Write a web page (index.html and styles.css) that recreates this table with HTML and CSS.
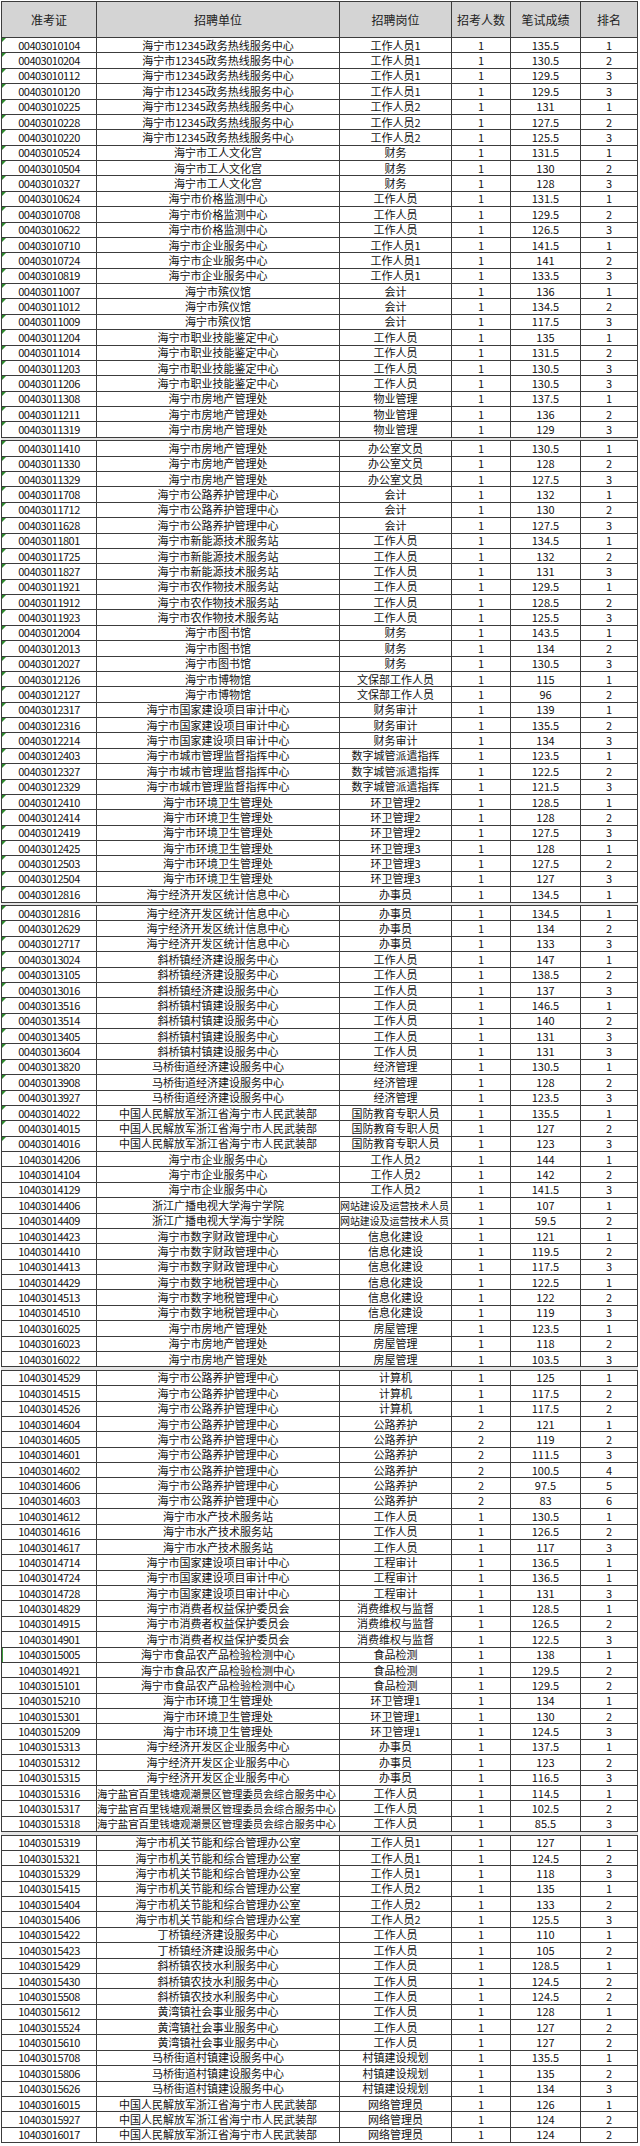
FILE: index.html
```html
<!DOCTYPE html>
<html lang="zh-CN">
<head>
<meta charset="utf-8">
<title>笔试成绩</title>
<link rel="stylesheet" href="styles.css">
</head>
<body>
<table class="sheet">
<colgroup>
<col class="c-id"><col class="c-unit"><col class="c-post"><col class="c-num"><col class="c-score"><col class="c-rank">
</colgroup>
<thead>
<tr class="head"><th>准考证</th><th>招聘单位</th><th>招聘岗位</th><th>招考人数</th><th>笔试成绩</th><th>排名</th></tr>
</thead>
<tbody>
<tr><td class="nt">00403010104</td><td>海宁市12345政务热线服务中心</td><td>工作人员1</td><td>1</td><td>135.5</td><td>1</td></tr>
<tr><td class="nt">00403010204</td><td>海宁市12345政务热线服务中心</td><td>工作人员1</td><td>1</td><td>130.5</td><td>2</td></tr>
<tr><td class="nt">00403010112</td><td>海宁市12345政务热线服务中心</td><td>工作人员1</td><td>1</td><td>129.5</td><td>3</td></tr>
<tr><td class="nt">00403010120</td><td>海宁市12345政务热线服务中心</td><td>工作人员1</td><td>1</td><td>129.5</td><td>3</td></tr>
<tr><td class="nt">00403010225</td><td>海宁市12345政务热线服务中心</td><td>工作人员2</td><td>1</td><td>131</td><td>1</td></tr>
<tr><td class="nt">00403010228</td><td>海宁市12345政务热线服务中心</td><td>工作人员2</td><td>1</td><td>127.5</td><td>2</td></tr>
<tr><td class="nt">00403010220</td><td>海宁市12345政务热线服务中心</td><td>工作人员2</td><td>1</td><td>125.5</td><td>3</td></tr>
<tr><td class="nt">00403010524</td><td>海宁市工人文化宫</td><td>财务</td><td>1</td><td>131.5</td><td>1</td></tr>
<tr><td class="nt">00403010504</td><td>海宁市工人文化宫</td><td>财务</td><td>1</td><td>130</td><td>2</td></tr>
<tr><td class="nt">00403010327</td><td>海宁市工人文化宫</td><td>财务</td><td>1</td><td>128</td><td>3</td></tr>
<tr><td class="nt">00403010624</td><td>海宁市价格监测中心</td><td>工作人员</td><td>1</td><td>131.5</td><td>1</td></tr>
<tr><td class="nt">00403010708</td><td>海宁市价格监测中心</td><td>工作人员</td><td>1</td><td>129.5</td><td>2</td></tr>
<tr><td class="nt">00403010622</td><td>海宁市价格监测中心</td><td>工作人员</td><td>1</td><td>126.5</td><td>3</td></tr>
<tr><td class="nt">00403010710</td><td>海宁市企业服务中心</td><td>工作人员1</td><td>1</td><td>141.5</td><td>1</td></tr>
<tr><td class="nt">00403010724</td><td>海宁市企业服务中心</td><td>工作人员1</td><td>1</td><td>141</td><td>2</td></tr>
<tr><td class="nt">00403010819</td><td>海宁市企业服务中心</td><td>工作人员1</td><td>1</td><td>133.5</td><td>3</td></tr>
<tr><td class="nt">00403011007</td><td>海宁市殡仪馆</td><td>会计</td><td>1</td><td>136</td><td>1</td></tr>
<tr><td class="nt">00403011012</td><td>海宁市殡仪馆</td><td>会计</td><td>1</td><td>134.5</td><td>2</td></tr>
<tr><td class="nt">00403011009</td><td>海宁市殡仪馆</td><td>会计</td><td>1</td><td>117.5</td><td>3</td></tr>
<tr><td class="nt">00403011204</td><td>海宁市职业技能鉴定中心</td><td>工作人员</td><td>1</td><td>135</td><td>1</td></tr>
<tr><td class="nt">00403011014</td><td>海宁市职业技能鉴定中心</td><td>工作人员</td><td>1</td><td>131.5</td><td>2</td></tr>
<tr><td class="nt">00403011203</td><td>海宁市职业技能鉴定中心</td><td>工作人员</td><td>1</td><td>130.5</td><td>3</td></tr>
<tr><td class="nt">00403011206</td><td>海宁市职业技能鉴定中心</td><td>工作人员</td><td>1</td><td>130.5</td><td>3</td></tr>
<tr><td class="nt">00403011308</td><td>海宁市房地产管理处</td><td>物业管理</td><td>1</td><td>137.5</td><td>1</td></tr>
<tr><td class="nt">00403011211</td><td>海宁市房地产管理处</td><td>物业管理</td><td>1</td><td>136</td><td>2</td></tr>
<tr><td class="nt">00403011319</td><td>海宁市房地产管理处</td><td>物业管理</td><td>1</td><td>129</td><td>3</td></tr>
<tr class="gap"><td colspan="6"></td></tr>
<tr><td class="nt">00403011410</td><td>海宁市房地产管理处</td><td>办公室文员</td><td>1</td><td>130.5</td><td>1</td></tr>
<tr><td class="nt">00403011330</td><td>海宁市房地产管理处</td><td>办公室文员</td><td>1</td><td>128</td><td>2</td></tr>
<tr><td class="nt">00403011329</td><td>海宁市房地产管理处</td><td>办公室文员</td><td>1</td><td>127.5</td><td>3</td></tr>
<tr><td class="nt">00403011708</td><td>海宁市公路养护管理中心</td><td>会计</td><td>1</td><td>132</td><td>1</td></tr>
<tr><td class="nt">00403011712</td><td>海宁市公路养护管理中心</td><td>会计</td><td>1</td><td>130</td><td>2</td></tr>
<tr><td class="nt">00403011628</td><td>海宁市公路养护管理中心</td><td>会计</td><td>1</td><td>127.5</td><td>3</td></tr>
<tr><td class="nt">00403011801</td><td>海宁市新能源技术服务站</td><td>工作人员</td><td>1</td><td>134.5</td><td>1</td></tr>
<tr><td class="nt">00403011725</td><td>海宁市新能源技术服务站</td><td>工作人员</td><td>1</td><td>132</td><td>2</td></tr>
<tr><td class="nt">00403011827</td><td>海宁市新能源技术服务站</td><td>工作人员</td><td>1</td><td>131</td><td>3</td></tr>
<tr><td class="nt">00403011921</td><td>海宁市农作物技术服务站</td><td>工作人员</td><td>1</td><td>129.5</td><td>1</td></tr>
<tr><td class="nt">00403011912</td><td>海宁市农作物技术服务站</td><td>工作人员</td><td>1</td><td>128.5</td><td>2</td></tr>
<tr><td class="nt">00403011923</td><td>海宁市农作物技术服务站</td><td>工作人员</td><td>1</td><td>125.5</td><td>3</td></tr>
<tr><td class="nt">00403012004</td><td>海宁市图书馆</td><td>财务</td><td>1</td><td>143.5</td><td>1</td></tr>
<tr><td class="nt">00403012013</td><td>海宁市图书馆</td><td>财务</td><td>1</td><td>134</td><td>2</td></tr>
<tr><td class="nt">00403012027</td><td>海宁市图书馆</td><td>财务</td><td>1</td><td>130.5</td><td>3</td></tr>
<tr><td class="nt">00403012126</td><td>海宁市博物馆</td><td>文保部工作人员</td><td>1</td><td>115</td><td>1</td></tr>
<tr><td class="nt">00403012127</td><td>海宁市博物馆</td><td>文保部工作人员</td><td>1</td><td>96</td><td>2</td></tr>
<tr><td class="nt">00403012317</td><td>海宁市国家建设项目审计中心</td><td>财务审计</td><td>1</td><td>139</td><td>1</td></tr>
<tr><td class="nt">00403012316</td><td>海宁市国家建设项目审计中心</td><td>财务审计</td><td>1</td><td>135.5</td><td>2</td></tr>
<tr><td class="nt">00403012214</td><td>海宁市国家建设项目审计中心</td><td>财务审计</td><td>1</td><td>134</td><td>3</td></tr>
<tr><td class="nt">00403012403</td><td>海宁市城市管理监督指挥中心</td><td>数字城管派遣指挥</td><td>1</td><td>123.5</td><td>1</td></tr>
<tr><td class="nt">00403012327</td><td>海宁市城市管理监督指挥中心</td><td>数字城管派遣指挥</td><td>1</td><td>122.5</td><td>2</td></tr>
<tr><td class="nt">00403012329</td><td>海宁市城市管理监督指挥中心</td><td>数字城管派遣指挥</td><td>1</td><td>121.5</td><td>3</td></tr>
<tr><td class="nt">00403012410</td><td>海宁市环境卫生管理处</td><td>环卫管理2</td><td>1</td><td>128.5</td><td>1</td></tr>
<tr><td class="nt">00403012414</td><td>海宁市环境卫生管理处</td><td>环卫管理2</td><td>1</td><td>128</td><td>2</td></tr>
<tr><td class="nt">00403012419</td><td>海宁市环境卫生管理处</td><td>环卫管理2</td><td>1</td><td>127.5</td><td>3</td></tr>
<tr><td class="nt">00403012425</td><td>海宁市环境卫生管理处</td><td>环卫管理3</td><td>1</td><td>128</td><td>1</td></tr>
<tr><td class="nt">00403012503</td><td>海宁市环境卫生管理处</td><td>环卫管理3</td><td>1</td><td>127.5</td><td>2</td></tr>
<tr><td class="nt">00403012504</td><td>海宁市环境卫生管理处</td><td>环卫管理3</td><td>1</td><td>127</td><td>3</td></tr>
<tr><td class="nt">00403012816</td><td>海宁经济开发区统计信息中心</td><td>办事员</td><td>1</td><td>134.5</td><td>1</td></tr>
<tr class="gap"><td colspan="6"></td></tr>
<tr><td class="nt">00403012816</td><td>海宁经济开发区统计信息中心</td><td>办事员</td><td>1</td><td>134.5</td><td>1</td></tr>
<tr><td class="nt">00403012629</td><td>海宁经济开发区统计信息中心</td><td>办事员</td><td>1</td><td>134</td><td>2</td></tr>
<tr><td class="nt">00403012717</td><td>海宁经济开发区统计信息中心</td><td>办事员</td><td>1</td><td>133</td><td>3</td></tr>
<tr><td class="nt">00403013024</td><td>斜桥镇经济建设服务中心</td><td>工作人员</td><td>1</td><td>147</td><td>1</td></tr>
<tr><td class="nt">00403013105</td><td>斜桥镇经济建设服务中心</td><td>工作人员</td><td>1</td><td>138.5</td><td>2</td></tr>
<tr><td class="nt">00403013016</td><td>斜桥镇经济建设服务中心</td><td>工作人员</td><td>1</td><td>137</td><td>3</td></tr>
<tr><td class="nt">00403013516</td><td>斜桥镇村镇建设服务中心</td><td>工作人员</td><td>1</td><td>146.5</td><td>1</td></tr>
<tr><td class="nt">00403013514</td><td>斜桥镇村镇建设服务中心</td><td>工作人员</td><td>1</td><td>140</td><td>2</td></tr>
<tr><td class="nt">00403013405</td><td>斜桥镇村镇建设服务中心</td><td>工作人员</td><td>1</td><td>131</td><td>3</td></tr>
<tr><td class="nt">00403013604</td><td>斜桥镇村镇建设服务中心</td><td>工作人员</td><td>1</td><td>131</td><td>3</td></tr>
<tr><td class="nt">00403013820</td><td>马桥街道经济建设服务中心</td><td>经济管理</td><td>1</td><td>130.5</td><td>1</td></tr>
<tr><td class="nt">00403013908</td><td>马桥街道经济建设服务中心</td><td>经济管理</td><td>1</td><td>128</td><td>2</td></tr>
<tr><td class="nt">00403013927</td><td>马桥街道经济建设服务中心</td><td>经济管理</td><td>1</td><td>123.5</td><td>3</td></tr>
<tr><td class="nt">00403014022</td><td>中国人民解放军浙江省海宁市人民武装部</td><td>国防教育专职人员</td><td>1</td><td>135.5</td><td>1</td></tr>
<tr><td class="nt">00403014015</td><td>中国人民解放军浙江省海宁市人民武装部</td><td>国防教育专职人员</td><td>1</td><td>127</td><td>2</td></tr>
<tr><td class="nt">00403014016</td><td>中国人民解放军浙江省海宁市人民武装部</td><td>国防教育专职人员</td><td>1</td><td>123</td><td>3</td></tr>
<tr><td>10403014206</td><td>海宁市企业服务中心</td><td>工作人员2</td><td>1</td><td>144</td><td>1</td></tr>
<tr><td>10403014104</td><td>海宁市企业服务中心</td><td>工作人员2</td><td>1</td><td>142</td><td>2</td></tr>
<tr><td>10403014129</td><td>海宁市企业服务中心</td><td>工作人员2</td><td>1</td><td>141.5</td><td>3</td></tr>
<tr><td>10403014406</td><td>浙江广播电视大学海宁学院</td><td class="over">网站建设及运营技术人员</td><td>1</td><td>107</td><td>1</td></tr>
<tr><td>10403014409</td><td>浙江广播电视大学海宁学院</td><td class="over">网站建设及运营技术人员</td><td>1</td><td>59.5</td><td>2</td></tr>
<tr><td>10403014423</td><td>海宁市数字财政管理中心</td><td>信息化建设</td><td>1</td><td>121</td><td>1</td></tr>
<tr><td>10403014410</td><td>海宁市数字财政管理中心</td><td>信息化建设</td><td>1</td><td>119.5</td><td>2</td></tr>
<tr><td>10403014413</td><td>海宁市数字财政管理中心</td><td>信息化建设</td><td>1</td><td>117.5</td><td>3</td></tr>
<tr><td>10403014429</td><td>海宁市数字地税管理中心</td><td>信息化建设</td><td>1</td><td>122.5</td><td>1</td></tr>
<tr><td>10403014513</td><td>海宁市数字地税管理中心</td><td>信息化建设</td><td>1</td><td>122</td><td>2</td></tr>
<tr><td>10403014510</td><td>海宁市数字地税管理中心</td><td>信息化建设</td><td>1</td><td>119</td><td>3</td></tr>
<tr><td>10403016025</td><td>海宁市房地产管理处</td><td>房屋管理</td><td>1</td><td>123.5</td><td>1</td></tr>
<tr><td>10403016023</td><td>海宁市房地产管理处</td><td>房屋管理</td><td>1</td><td>118</td><td>2</td></tr>
<tr><td>10403016022</td><td>海宁市房地产管理处</td><td>房屋管理</td><td>1</td><td>103.5</td><td>3</td></tr>
<tr class="gap"><td colspan="6"></td></tr>
<tr><td>10403014529</td><td>海宁市公路养护管理中心</td><td>计算机</td><td>1</td><td>125</td><td>1</td></tr>
<tr><td>10403014515</td><td>海宁市公路养护管理中心</td><td>计算机</td><td>1</td><td>117.5</td><td>2</td></tr>
<tr><td>10403014526</td><td>海宁市公路养护管理中心</td><td>计算机</td><td>1</td><td>117.5</td><td>2</td></tr>
<tr><td>10403014604</td><td>海宁市公路养护管理中心</td><td>公路养护</td><td>2</td><td>121</td><td>1</td></tr>
<tr><td>10403014605</td><td>海宁市公路养护管理中心</td><td>公路养护</td><td>2</td><td>119</td><td>2</td></tr>
<tr><td>10403014601</td><td>海宁市公路养护管理中心</td><td>公路养护</td><td>2</td><td>111.5</td><td>3</td></tr>
<tr><td>10403014602</td><td>海宁市公路养护管理中心</td><td>公路养护</td><td>2</td><td>100.5</td><td>4</td></tr>
<tr><td>10403014606</td><td>海宁市公路养护管理中心</td><td>公路养护</td><td>2</td><td>97.5</td><td>5</td></tr>
<tr><td>10403014603</td><td>海宁市公路养护管理中心</td><td>公路养护</td><td>2</td><td>83</td><td>6</td></tr>
<tr><td>10403014612</td><td>海宁市水产技术服务站</td><td>工作人员</td><td>1</td><td>130.5</td><td>1</td></tr>
<tr><td>10403014616</td><td>海宁市水产技术服务站</td><td>工作人员</td><td>1</td><td>126.5</td><td>2</td></tr>
<tr><td>10403014617</td><td>海宁市水产技术服务站</td><td>工作人员</td><td>1</td><td>117</td><td>3</td></tr>
<tr><td>10403014714</td><td>海宁市国家建设项目审计中心</td><td>工程审计</td><td>1</td><td>136.5</td><td>1</td></tr>
<tr><td>10403014724</td><td>海宁市国家建设项目审计中心</td><td>工程审计</td><td>1</td><td>136.5</td><td>1</td></tr>
<tr><td>10403014728</td><td>海宁市国家建设项目审计中心</td><td>工程审计</td><td>1</td><td>131</td><td>3</td></tr>
<tr><td>10403014829</td><td>海宁市消费者权益保护委员会</td><td>消费维权与监督</td><td>1</td><td>128.5</td><td>1</td></tr>
<tr><td>10403014915</td><td>海宁市消费者权益保护委员会</td><td>消费维权与监督</td><td>1</td><td>126.5</td><td>2</td></tr>
<tr><td>10403014901</td><td>海宁市消费者权益保护委员会</td><td>消费维权与监督</td><td>1</td><td>122.5</td><td>3</td></tr>
<tr><td class="mark">10403015005</td><td>海宁市食品农产品检验检测中心</td><td>食品检测</td><td>1</td><td>138</td><td>1</td></tr>
<tr><td>10403014921</td><td>海宁市食品农产品检验检测中心</td><td>食品检测</td><td>1</td><td>129.5</td><td>2</td></tr>
<tr><td>10403015101</td><td>海宁市食品农产品检验检测中心</td><td>食品检测</td><td>1</td><td>129.5</td><td>2</td></tr>
<tr><td>10403015210</td><td>海宁市环境卫生管理处</td><td>环卫管理1</td><td>1</td><td>134</td><td>1</td></tr>
<tr><td>10403015301</td><td>海宁市环境卫生管理处</td><td>环卫管理1</td><td>1</td><td>130</td><td>2</td></tr>
<tr><td>10403015209</td><td>海宁市环境卫生管理处</td><td>环卫管理1</td><td>1</td><td>124.5</td><td>3</td></tr>
<tr><td>10403015313</td><td>海宁经济开发区企业服务中心</td><td>办事员</td><td>1</td><td>137.5</td><td>1</td></tr>
<tr><td>10403015312</td><td>海宁经济开发区企业服务中心</td><td>办事员</td><td>1</td><td>123</td><td>2</td></tr>
<tr><td>10403015315</td><td>海宁经济开发区企业服务中心</td><td>办事员</td><td>1</td><td>116.5</td><td>3</td></tr>
<tr><td>10403015316</td><td class="long">海宁盐官百里钱塘观潮景区管理委员会综合服务中心</td><td>工作人员</td><td>1</td><td>114.5</td><td>1</td></tr>
<tr><td>10403015317</td><td class="long">海宁盐官百里钱塘观潮景区管理委员会综合服务中心</td><td>工作人员</td><td>1</td><td>102.5</td><td>2</td></tr>
<tr><td>10403015318</td><td class="long">海宁盐官百里钱塘观潮景区管理委员会综合服务中心</td><td>工作人员</td><td>1</td><td>85.5</td><td>3</td></tr>
<tr class="gap"><td colspan="6"></td></tr>
<tr><td>10403015319</td><td>海宁市机关节能和综合管理办公室</td><td>工作人员1</td><td>1</td><td>127</td><td>1</td></tr>
<tr><td>10403015321</td><td>海宁市机关节能和综合管理办公室</td><td>工作人员1</td><td>1</td><td>124.5</td><td>2</td></tr>
<tr><td>10403015329</td><td>海宁市机关节能和综合管理办公室</td><td>工作人员1</td><td>1</td><td>118</td><td>3</td></tr>
<tr><td>10403015415</td><td>海宁市机关节能和综合管理办公室</td><td>工作人员2</td><td>1</td><td>135</td><td>1</td></tr>
<tr><td>10403015404</td><td>海宁市机关节能和综合管理办公室</td><td>工作人员2</td><td>1</td><td>133</td><td>2</td></tr>
<tr><td>10403015406</td><td>海宁市机关节能和综合管理办公室</td><td>工作人员2</td><td>1</td><td>125.5</td><td>3</td></tr>
<tr><td>10403015422</td><td>丁桥镇经济建设服务中心</td><td>工作人员</td><td>1</td><td>110</td><td>1</td></tr>
<tr><td>10403015423</td><td>丁桥镇经济建设服务中心</td><td>工作人员</td><td>1</td><td>105</td><td>2</td></tr>
<tr><td>10403015429</td><td>斜桥镇农技水利服务中心</td><td>工作人员</td><td>1</td><td>128.5</td><td>1</td></tr>
<tr><td>10403015430</td><td>斜桥镇农技水利服务中心</td><td>工作人员</td><td>1</td><td>124.5</td><td>2</td></tr>
<tr><td>10403015508</td><td>斜桥镇农技水利服务中心</td><td>工作人员</td><td>1</td><td>124.5</td><td>2</td></tr>
<tr><td>10403015612</td><td>黄湾镇社会事业服务中心</td><td>工作人员</td><td>1</td><td>128</td><td>1</td></tr>
<tr><td>10403015524</td><td>黄湾镇社会事业服务中心</td><td>工作人员</td><td>1</td><td>127</td><td>2</td></tr>
<tr><td>10403015610</td><td>黄湾镇社会事业服务中心</td><td>工作人员</td><td>1</td><td>127</td><td>2</td></tr>
<tr><td>10403015708</td><td>马桥街道村镇建设服务中心</td><td>村镇建设规划</td><td>1</td><td>135.5</td><td>1</td></tr>
<tr><td>10403015806</td><td>马桥街道村镇建设服务中心</td><td>村镇建设规划</td><td>1</td><td>135</td><td>2</td></tr>
<tr><td>10403015626</td><td>马桥街道村镇建设服务中心</td><td>村镇建设规划</td><td>1</td><td>134</td><td>3</td></tr>
<tr><td>10403016015</td><td>中国人民解放军浙江省海宁市人民武装部</td><td>网络管理员</td><td>1</td><td>126</td><td>1</td></tr>
<tr><td>10403015927</td><td>中国人民解放军浙江省海宁市人民武装部</td><td>网络管理员</td><td>1</td><td>124</td><td>2</td></tr>
<tr><td>10403016017</td><td>中国人民解放军浙江省海宁市人民武装部</td><td>网络管理员</td><td>1</td><td>124</td><td>2</td></tr>
</tbody>
</table>
</body>
</html>
```

FILE: styles.css
```css
html, body {
  margin: 0;
  padding: 0;
  background: #ffffff;
}

body {
  padding: 1px 0 0 1px;
  font-family: "Noto Sans CJK SC", "Noto Sans", sans-serif;
  font-size: 11px;
  color: #111111;
}

.sheet {
  border-collapse: collapse;
  table-layout: fixed;
  width: 636px;
}

.c-id { width: 95px; }
.c-unit { width: 243px; }
.c-post { width: 112px; }
.c-num { width: 59px; }
.c-score { width: 70px; }
.c-rank { width: 57px; }

.sheet th,
.sheet td {
  border: 1px solid #3c3c3c;
  padding: 0;
  text-align: center;
  vertical-align: middle;
  white-space: nowrap;
  overflow: hidden;
  line-height: 13px;
  font-weight: 400;
}

.sheet tbody td:first-child {
  letter-spacing: -0.5px;
}

.sheet td.over {
  text-align: left;
  font-size: 10px;
  letter-spacing: -0.1px;
}

.sheet td.long {
  text-align: left;
  font-size: 10.4px;
  letter-spacing: 0;
}

.head {
  height: 36px;
}

.head th {
  background: #d4d4d4;
  color: #222222;
  font-size: 12px;
}

.sheet tbody tr {
  height: 15.38px;
}

.sheet tbody tr.gap {
  height: 3.5px;
}

.gap td {
  background: #e4e4e4;
  border-left-color: #e4e4e4;
  border-right-color: #e4e4e4;
}

.nt,
.mark {
  position: relative;
}

.nt::before {
  content: "";
  position: absolute;
  left: 0;
  top: 0;
  border-top: 4px solid #2d8a2d;
  border-right: 4px solid transparent;
}

.mark::before {
  content: "";
  position: absolute;
  left: 0;
  top: 0;
  bottom: 0;
  width: 1px;
  background: #3b9a3b;
}
```
